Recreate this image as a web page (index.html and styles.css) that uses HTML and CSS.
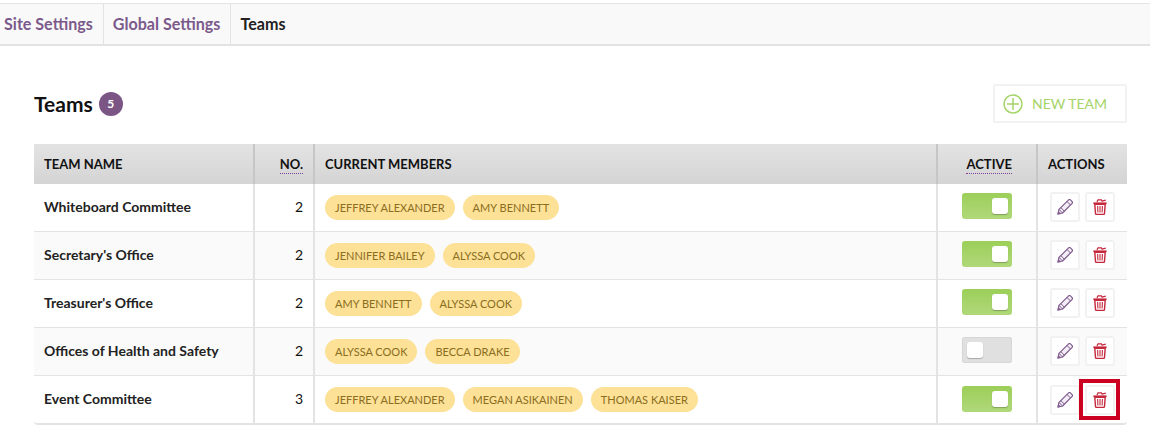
FILE: index.html
```html
<!DOCTYPE html>
<html lang="en">
<head>
    <meta name="viewport" content="width=device-width, initial-scale=1.0">
    <title>Teams</title>
    <link rel="stylesheet" href="styles.css">
</head>
<body>
<svg class="sprites" width="0" height="0">
    <symbol id="i-pencil" viewBox="0 0 16 16">
        <path d="M.8 15.200l1.200-4.800L11.600.9a1.300 1.300 0 0 1 1.800 0l1.700 1.700a1.300 1.300 0 0 1 0 1.800L5.600 14z" fill="#f3eef5" stroke="#7d5a8c" stroke-width="1.200" stroke-linejoin="round"/>
        <path d="M2 10.400l3.600 3.600M3.800 8.600l3.600 3.600M10 2.500l3.500 3.500" fill="none" stroke="#7d5a8c" stroke-width="1"/>
        <path d="M.8 15.200l.8-3 2.200 2.200z" fill="#7d5a8c"/>
    </symbol>
    <symbol id="i-trash" viewBox="0 0 16 16">
        <path d="M1.400 4.300h13.200" fill="none" stroke="#c5283d" stroke-width="1.800"/>
        <path d="M5 3l1-2.200h3.400l.8 1.800M10 2.200l3.800-1" fill="none" stroke="#c5283d" stroke-width="1.200"/>
        <path d="M2.800 5.400h10.400l-.7 9a1.100 1.100 0 0 1-1.100 1H4.600a1.100 1.100 0 0 1-1.100-1z" fill="none" stroke="#c5283d" stroke-width="1.400" stroke-linejoin="round"/>
        <path d="M5.600 7l.3 6.600M8 7v6.600M10.400 7l-.3 6.600" fill="none" stroke="#c5283d" stroke-width="1.100"/>
    </symbol>
</svg>
<nav class="tabs">
    <a class="tab tab-first" href="#">Site Settings</a>
    <a class="tab" href="#">Global Settings</a>
    <span class="tab tab-active">Teams</span>
</nav>
<div class="page-head">
    <h1>Teams <span class="count">5</span></h1>
    <a class="btn-new" href="#">
        <svg width="20" height="20" viewBox="0 0 20 20"><circle cx="10" cy="10" r="9" fill="none" stroke="#a5d469" stroke-width="1.500"/><path d="M10 4v12M4 10h12" stroke="#a5d469" stroke-width="1.500"/></svg>
        NEW TEAM
    </a>
</div>
<table class="teams">
    <thead>
        <tr>
            <th class="c-name">TEAM NAME</th>
            <th class="c-no"><abbr>NO.</abbr></th>
            <th class="c-members">CURRENT MEMBERS</th>
            <th class="c-active"><abbr>ACTIVE</abbr></th>
            <th class="c-actions">ACTIONS</th>
        </tr>
    </thead>
    <tbody>
        <tr>
            <td class="c-name">Whiteboard Committee</td>
            <td class="c-no">2</td>
            <td class="c-members"><span class="pill">JEFFREY ALEXANDER</span><span class="pill">AMY BENNETT</span></td>
            <td class="c-active"><span class="toggle on"><i></i></span></td>
            <td class="c-actions"><div class="acts"><a class="act" href="#"><svg width="16" height="16"><use href="#i-pencil"/></svg></a><a class="act" href="#"><svg width="16" height="16"><use href="#i-trash"/></svg></a></div></td>
        </tr>
        <tr>
            <td class="c-name">Secretary's Office</td>
            <td class="c-no">2</td>
            <td class="c-members"><span class="pill">JENNIFER BAILEY</span><span class="pill">ALYSSA COOK</span></td>
            <td class="c-active"><span class="toggle on"><i></i></span></td>
            <td class="c-actions"><div class="acts"><a class="act" href="#"><svg width="16" height="16"><use href="#i-pencil"/></svg></a><a class="act" href="#"><svg width="16" height="16"><use href="#i-trash"/></svg></a></div></td>
        </tr>
        <tr>
            <td class="c-name">Treasurer's Office</td>
            <td class="c-no">2</td>
            <td class="c-members"><span class="pill">AMY BENNETT</span><span class="pill">ALYSSA COOK</span></td>
            <td class="c-active"><span class="toggle on"><i></i></span></td>
            <td class="c-actions"><div class="acts"><a class="act" href="#"><svg width="16" height="16"><use href="#i-pencil"/></svg></a><a class="act" href="#"><svg width="16" height="16"><use href="#i-trash"/></svg></a></div></td>
        </tr>
        <tr>
            <td class="c-name">Offices of Health and Safety</td>
            <td class="c-no">2</td>
            <td class="c-members"><span class="pill">ALYSSA COOK</span><span class="pill">BECCA DRAKE</span></td>
            <td class="c-active"><span class="toggle"><i></i></span></td>
            <td class="c-actions"><div class="acts"><a class="act" href="#"><svg width="16" height="16"><use href="#i-pencil"/></svg></a><a class="act" href="#"><svg width="16" height="16"><use href="#i-trash"/></svg></a></div></td>
        </tr>
        <tr>
            <td class="c-name">Event Committee</td>
            <td class="c-no">3</td>
            <td class="c-members"><span class="pill">JEFFREY ALEXANDER</span><span class="pill">MEGAN ASIKAINEN</span><span class="pill">THOMAS KAISER</span></td>
            <td class="c-active"><span class="toggle on"><i></i></span></td>
            <td class="c-actions"><div class="acts"><a class="act" href="#"><svg width="16" height="16"><use href="#i-pencil"/></svg></a><a class="act act-marked" href="#"><svg width="16" height="16"><use href="#i-trash"/></svg></a></div></td>
        </tr>
    </tbody>
</table>
</body>
</html>
```

FILE: styles.css
```css
html{margin: 0; padding: 0;}
body{margin: 0; padding: 0; background: #fff; color: #111; font-family: Lato, "Liberation Sans", sans-serif; font-size: 14px; overflow: hidden;}
a{text-decoration: none;}
.sprites{position: absolute;}

.tabs{display: flex; height: 40px; margin-top: 3px; background: #f9f9f9; border-top: 1px solid #e6e6e6; border-bottom: 2px solid #e3e3e3;}
.tab{display: block; padding: 0 10px 0 9px; line-height: 40px; font-size: 16.1px; font-weight: 700; color: #7b5a8b; border-right: 1px solid #e3e3e3;}
.tab-first{padding-left: 4px;}
.tab-active{color: #222; border-right: 0;}

.page-head{display: flex; justify-content: space-between; align-items: center; margin: 38px 23px 21px 34px;}
.page-head h1{margin: 0; display: flex; align-items: center; gap: 6px; font-size: 21px; font-weight: 700; color: #111;}
.count{display: inline-block; width: 24px; height: 24px; border-radius: 50%; background: #7b5584; color: #fff; font-size: 12px; font-weight: 700; line-height: 24px; text-align: center;}
.btn-new{display: flex; align-items: center; gap: 9px; box-sizing: border-box; width: 134px; height: 39px; padding-left: 8px; border: 2px solid #f2f2f2; border-radius: 2px; color: #a5d469; font-size: 14px;}

.teams{width: 1093px; margin-left: 34px; border-collapse: separate; border-spacing: 0; table-layout: fixed; border-bottom: 2px solid #e3e3e3; border-radius: 0 0 4px 4px;}
.teams th{height: 40px; padding: 0 10px; box-sizing: border-box; background: linear-gradient(#e3e3e3, #d4d4d4); font-size: 13px; font-weight: 700; color: #111; text-align: left; border-right: 2px solid #c6c6c6;}
.teams th:last-child, .teams td:last-child{border-right: 0;}
.teams td{height: 48px; padding: 0 10px 1px; box-sizing: border-box; font-size: 14px; border-right: 2px solid #e3e3e3; border-bottom: 1px solid #e3e3e3;}
.teams tbody tr:nth-child(even) td{background: #fafafa;}
.teams tbody tr:last-child td{height: 47px; border-bottom: 0; padding-bottom: 0;}
.teams td.c-name, .teams td.c-no{padding-bottom: 3px;}
.teams tbody tr:last-child td.c-name, .teams tbody tr:last-child td.c-no{padding-bottom: 2px;}
.teams td.c-name{font-weight: 700; color: #222;}
.teams abbr{border-bottom: 1px dotted #7b3fa0; padding-bottom: 1px;}

.c-name{width: 221px;}
.c-no{width: 60px; text-align: right !important;}
.c-members{width: 623px;}
.teams .c-active{width: 100px; text-align: right; padding-right: 24px;}
.c-actions{width: 89px;}

.pill{display: inline-block; height: 25px; margin-right: 8px; padding: 0 10px; border-radius: 13px; background: #fce196; color: #8b6d1e; font-size: 11px; line-height: 25px; vertical-align: middle;}

.toggle{display: block; box-sizing: border-box; width: 50px; height: 26px; margin: -1px 0 1px auto; padding: 5px; border-radius: 3px; background: #e0e0e0; box-shadow: inset 0 0 0 1px #d6d6d6;}
.toggle i{display: block; width: 16px; height: 16px; border-radius: 3px; background: #fff; box-shadow: 0 1px 1px rgba(0,0,0,.25);}
.toggle.on{background: linear-gradient(#9ccf59, #b0d87a); box-shadow: none;}
.toggle.on i{margin-left: 25px;}

.acts{display: flex; gap: 5px; margin-left: 2px;}
.act{position: relative; display: flex; align-items: center; justify-content: center; box-sizing: border-box; width: 30px; height: 30px; border: 2px solid #f2f2f2; border-radius: 3px; background: #fff;}
.act-marked::after{content: ""; position: absolute; top: -8px; left: -8px; width: 41px; height: 41px; box-sizing: border-box; border: 4px solid #cc0020;}
```
